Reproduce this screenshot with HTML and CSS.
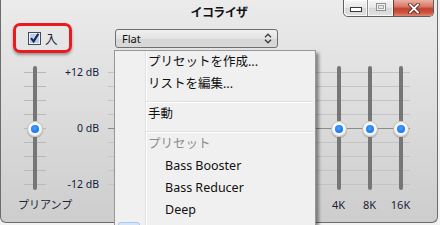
FILE: index.html
```html
<!DOCTYPE html>
<html lang="ja">
<head>
<meta charset="utf-8">
<title>イコライザ</title>
<link rel="stylesheet" href="styles.css">
</head>
<body>
<div class="window">
  <div class="titlebar">
    <div></div>
    <div class="title">イコライザ</div>
    <div class="controls">
      <div class="btn min"><span class="min-icon"></span></div>
      <div class="btn max"><span class="max-icon"></span></div>
      <div class="btn close">
        <svg width="12" height="11" viewBox="0 0 12 11"><path d="M2 1.5 L10 9.5 M10 1.5 L2 9.5" fill="none" stroke="#5b2a22" stroke-width="3.6" stroke-linecap="square"/><path d="M2 1.5 L10 9.5 M10 1.5 L2 9.5" fill="none" stroke="#ffffff" stroke-width="1.8" stroke-linecap="square"/></svg>
      </div>
    </div>
  </div>

  <div class="toolbar">
    <label class="onbox">
      <svg class="check" width="13" height="13" viewBox="0 0 13 13">
        <rect x="0.5" y="0.5" width="12" height="12" fill="#eef2f7" stroke="#3f4b66"/>
        <rect x="2" y="2" width="9" height="9" fill="#bcd0ea"/>
        <path d="M3 6.2 L5.6 9.4 L10.4 1.8" fill="none" stroke="#1b2750" stroke-width="2.1"/>
      </svg>
      <span class="on-text">入</span>
    </label>
    <div class="select">
      <span class="select-text">Flat</span>
      <svg width="8" height="11" viewBox="0 0 8 11"><path d="M1 4.2 L4 1.2 L7 4.2 M1 6.8 L4 9.8 L7 6.8" fill="none" stroke="#3c3c3c" stroke-width="1.3"/></svg>
    </div>
  </div>

  <div class="eq">
    <div class="pre-slider">
      <div class="slider">
        <div class="track top"></div>
        <div class="knob"><span class="dot"></span></div>
        <div class="track bottom"></div>
      </div>
    </div>
    <div class="scale">
      <span>+12 dB</span>
      <span>0 dB</span>
      <span>-12 dB</span>
    </div>
    <div class="band-row">
      <div class="slider"><div class="track top"></div><div class="knob"><span class="dot"></span></div><div class="track bottom"></div></div>
      <div class="slider"><div class="track top"></div><div class="knob"><span class="dot"></span></div><div class="track bottom"></div></div>
      <div class="slider"><div class="track top"></div><div class="knob"><span class="dot"></span></div><div class="track bottom"></div></div>
      <div class="slider"><div class="track top"></div><div class="knob"><span class="dot"></span></div><div class="track bottom"></div></div>
      <div class="slider"><div class="track top"></div><div class="knob"><span class="dot"></span></div><div class="track bottom"></div></div>
      <div class="slider"><div class="track top"></div><div class="knob"><span class="dot"></span></div><div class="track bottom"></div></div>
      <div class="slider"><div class="track top"></div><div class="knob"><span class="dot"></span></div><div class="track bottom"></div></div>
      <div class="slider"><div class="track top"></div><div class="knob"><span class="dot"></span></div><div class="track bottom"></div></div>
      <div class="slider"><div class="track top"></div><div class="knob"><span class="dot"></span></div><div class="track bottom"></div></div>
      <div class="slider"><div class="track top"></div><div class="knob"><span class="dot"></span></div><div class="track bottom"></div></div>
    </div>

    <div class="pre-label">プリアンプ</div>
    <div></div>
    <div class="label-row">
      <span></span><span></span><span></span><span></span><span></span>
      <span></span><span></span><span>4K</span><span>8K</span><span>16K</span>
    </div>
  </div>

  <div class="menu">
    <div class="item">プリセットを作成...</div>
    <div class="item">リストを編集...</div>
    <div class="sep"></div>
    <div class="item">手動</div>
    <div class="sep"></div>
    <div class="item header">プリセット</div>
    <div class="item preset">Bass Booster</div>
    <div class="item preset">Bass Reducer</div>
    <div class="item preset">Deep</div>
    <div class="item preset checked"><span class="check-bg"></span></div>
  </div>
</div>
</body>
</html>
```

FILE: styles.css
```css
html, body {
  margin: 0;
  padding: 0;
  width: 440px;
  height: 225px;
  overflow: hidden;
  background: #f2f2f2;
}

body {
  font-family: "Noto Sans", "Noto Sans CJK JP", sans-serif;
  color: #1c2333;
}

.window {
  position: relative;
  box-sizing: border-box;
  width: 438px;
  height: 223px;
  border: 1px solid #6d6d6d;
  border-top: none;
  border-radius: 0 0 6px 6px;
  background: linear-gradient(#ebebeb 0%, #dfdfdf 40%, #cdcdcd 100%);
}

/* title bar */
.titlebar {
  height: 23px;
  display: grid;
  grid-template-columns: 1fr auto 1fr;
}

.title {
  font-family: "Noto Sans CJK JP", sans-serif;
  font-weight: 700;
  font-size: 12px;
  line-height: 24px;
  letter-spacing: -0.6px;
  color: #111;
}

.controls {
  justify-self: end;
  align-self: start;
  display: flex;
  height: 17px;
  margin-right: 3px;
  border: 1px solid #5e5e5e;
  border-top: none;
  border-radius: 0 0 5px 5px;
  overflow: hidden;
  box-sizing: border-box;
}

.btn {
  display: flex;
  align-items: center;
  justify-content: center;
  box-sizing: border-box;
  height: 16px;
}

.min, .max {
  background: linear-gradient(#f5f5f5 0%, #e6e6e6 50%, #d6d6d6 51%, #e2e2e2 100%);
  box-shadow: inset 0 0 0 1px rgba(255,255,255,0.7);
}

.min {
  width: 24px;
  border-right: 1px solid #8c8c8c;
  border-radius: 0 0 0 4px;
}

.max {
  width: 26px;
  border-right: 1px solid #6e3a30;
}

.close {
  width: 39px;
  background: linear-gradient(#eab0a2 0%, #d87a68 40%, #c5402f 55%, #cf5540 80%, #e08a70 100%);
}

.min-icon {
  display: block;
  width: 10px;
  height: 3px;
  margin-top: 3px;
  background: #fff;
  border: 1px solid #3a3a3a;
}

.max-icon {
  display: block;
  width: 8px;
  height: 6px;
  margin-top: -2px;
  border: 1px solid #8e8e8e;
  box-shadow: inset 0 0 0 1px #f4f4f4, inset 0 0 0 2px #a8a8a8;
}

/* toolbar */
.toolbar {
  display: flex;
  align-items: flex-start;
  height: 30px;
}

.onbox {
  box-sizing: border-box;
  width: 59px;
  height: 30px;
  margin-left: 12px;
  border: 3px solid #ea1a1f;
  border-radius: 7px;
  box-shadow: 0 2px 3px rgba(0,0,0,0.35);
  display: flex;
  align-items: center;
  padding-left: 12px;
  padding-top: 1px;
}

.check {
  display: block;
  flex: none;
}

.on-text {
  font-family: "Noto Sans CJK JP", sans-serif;
  font-size: 12.5px;
  margin-left: 4px;
  color: #1c2340;
  line-height: 14px;
}

.select {
  box-sizing: border-box;
  width: 163px;
  height: 19px;
  margin-left: 43px;
  margin-top: 6px;
  border: 1px solid #6f6f6f;
  border-radius: 3px;
  background: linear-gradient(#f0f0f0 0%, #e3e3e3 50%, #d6d6d6 51%, #d9d9d9 100%);
  display: flex;
  align-items: center;
  justify-content: space-between;
  padding: 0 5px 0 6px;
}

.select-text {
  font-size: 11px;
  color: #111;
  line-height: 17px;
}

.select svg {
  display: block;
}

/* equalizer */
.eq {
  margin-top: 13px;
  display: grid;
  grid-template-columns: 60px 45px 310px;
  grid-template-rows: 124px auto;
}

.pre-slider {
  padding-left: 23px;
}

.pre-slider .slider {
  width: 22px;
  background:
    repeating-linear-gradient(to bottom, transparent 0 6px, #b9b9b9 6px 7px, transparent 7px 14px)
    0 0 / 22px 124px no-repeat;
}

.slider {
  height: 124px;
  display: flex;
  flex-direction: column;
  align-items: center;
}

.track {
  width: 4px;
  height: 55px;
  background: #767676;
  flex: none;
}

.track.top {
  border-radius: 2px 2px 0 0;
}

.track.bottom {
  border-radius: 0 0 2px 2px;
  height: 53px;
}

.knob {
  flex: none;
  box-sizing: border-box;
  width: 16px;
  height: 16px;
  border-radius: 50%;
  background: radial-gradient(circle at 50% 40%, #ffffff 0%, #f4f4f4 60%, #dcdcdc 100%);
  border: 1px solid #c2c2c2;
  box-shadow: 0 1px 1px rgba(0,0,0,0.25);
  display: flex;
  align-items: center;
  justify-content: center;
}

.dot {
  display: block;
  width: 8px;
  height: 8px;
  border-radius: 50%;
  background: radial-gradient(circle at 45% 40%, #4aa0ff 0%, #1777f2 70%, #0f66d8 100%);
}

.scale {
  display: flex;
  flex-direction: column;
  justify-content: space-between;
  align-items: flex-end;
  padding-right: 7px;
  font-size: 10.5px;
  line-height: 12px;
  color: #14203a;
}

.band-row {
  display: flex;
  background:
    linear-gradient(#8a8a8a, #8a8a8a) 2px 62px / 302px 1px no-repeat,
    repeating-linear-gradient(to bottom, transparent 0 6px, #c4c4c4 6px 7px, transparent 7px 14px)
    2px 0 / 302px 124px no-repeat;
}

.band-row .slider {
  width: 31px;
}

.pre-label {
  margin-top: 7px;
  margin-left: 17px;
  white-space: nowrap;
  font-family: "Noto Sans CJK JP", sans-serif;
  font-size: 11px;
  line-height: 14px;
  color: #1c2333;
}

.label-row {
  margin-top: 8px;
  display: flex;
  height: 14px;
  font-size: 11px;
  line-height: 14px;
  color: #1c1c3a;
}

.label-row span {
  width: 31px;
  text-align: center;
}

/* dropdown menu */
.menu {
  position: absolute;
  left: 113px;
  top: 50px;
  width: 202px;
  height: 185px;
  box-sizing: border-box;
  border: 1px solid #979797;
  background:
    linear-gradient(to right, transparent 30px, #e0e1e1 30px 31px, #ffffff 31px 32px, transparent 32px),
    #f0f0f0;
  box-shadow: 3px 3px 3px rgba(0,0,0,0.4);
  font-size: 12.5px;
  color: #111;
}

.item {
  height: 22px;
  line-height: 22px;
  padding-left: 33px;
  white-space: nowrap;
  display: flex;
  align-items: flex-start;
}

.item.header {
  color: #8d8d8d;
}

.item.preset {
  padding-left: 50px;
}

.item.checked {
  padding-left: 3px;
}

.check-bg {
  display: block;
  box-sizing: border-box;
  width: 22px;
  height: 20px;
  margin-top: 1px;
  border: 1px solid #a8c8ee;
  border-radius: 3px;
  background: #d6e6f8;
}

.sep {
  height: 1px;
  margin-top: 6px;
  margin-left: 31px;
  margin-right: 2px;
  background: #e0e0e0;
  border-bottom: 1px solid #ffffff;
}
```
